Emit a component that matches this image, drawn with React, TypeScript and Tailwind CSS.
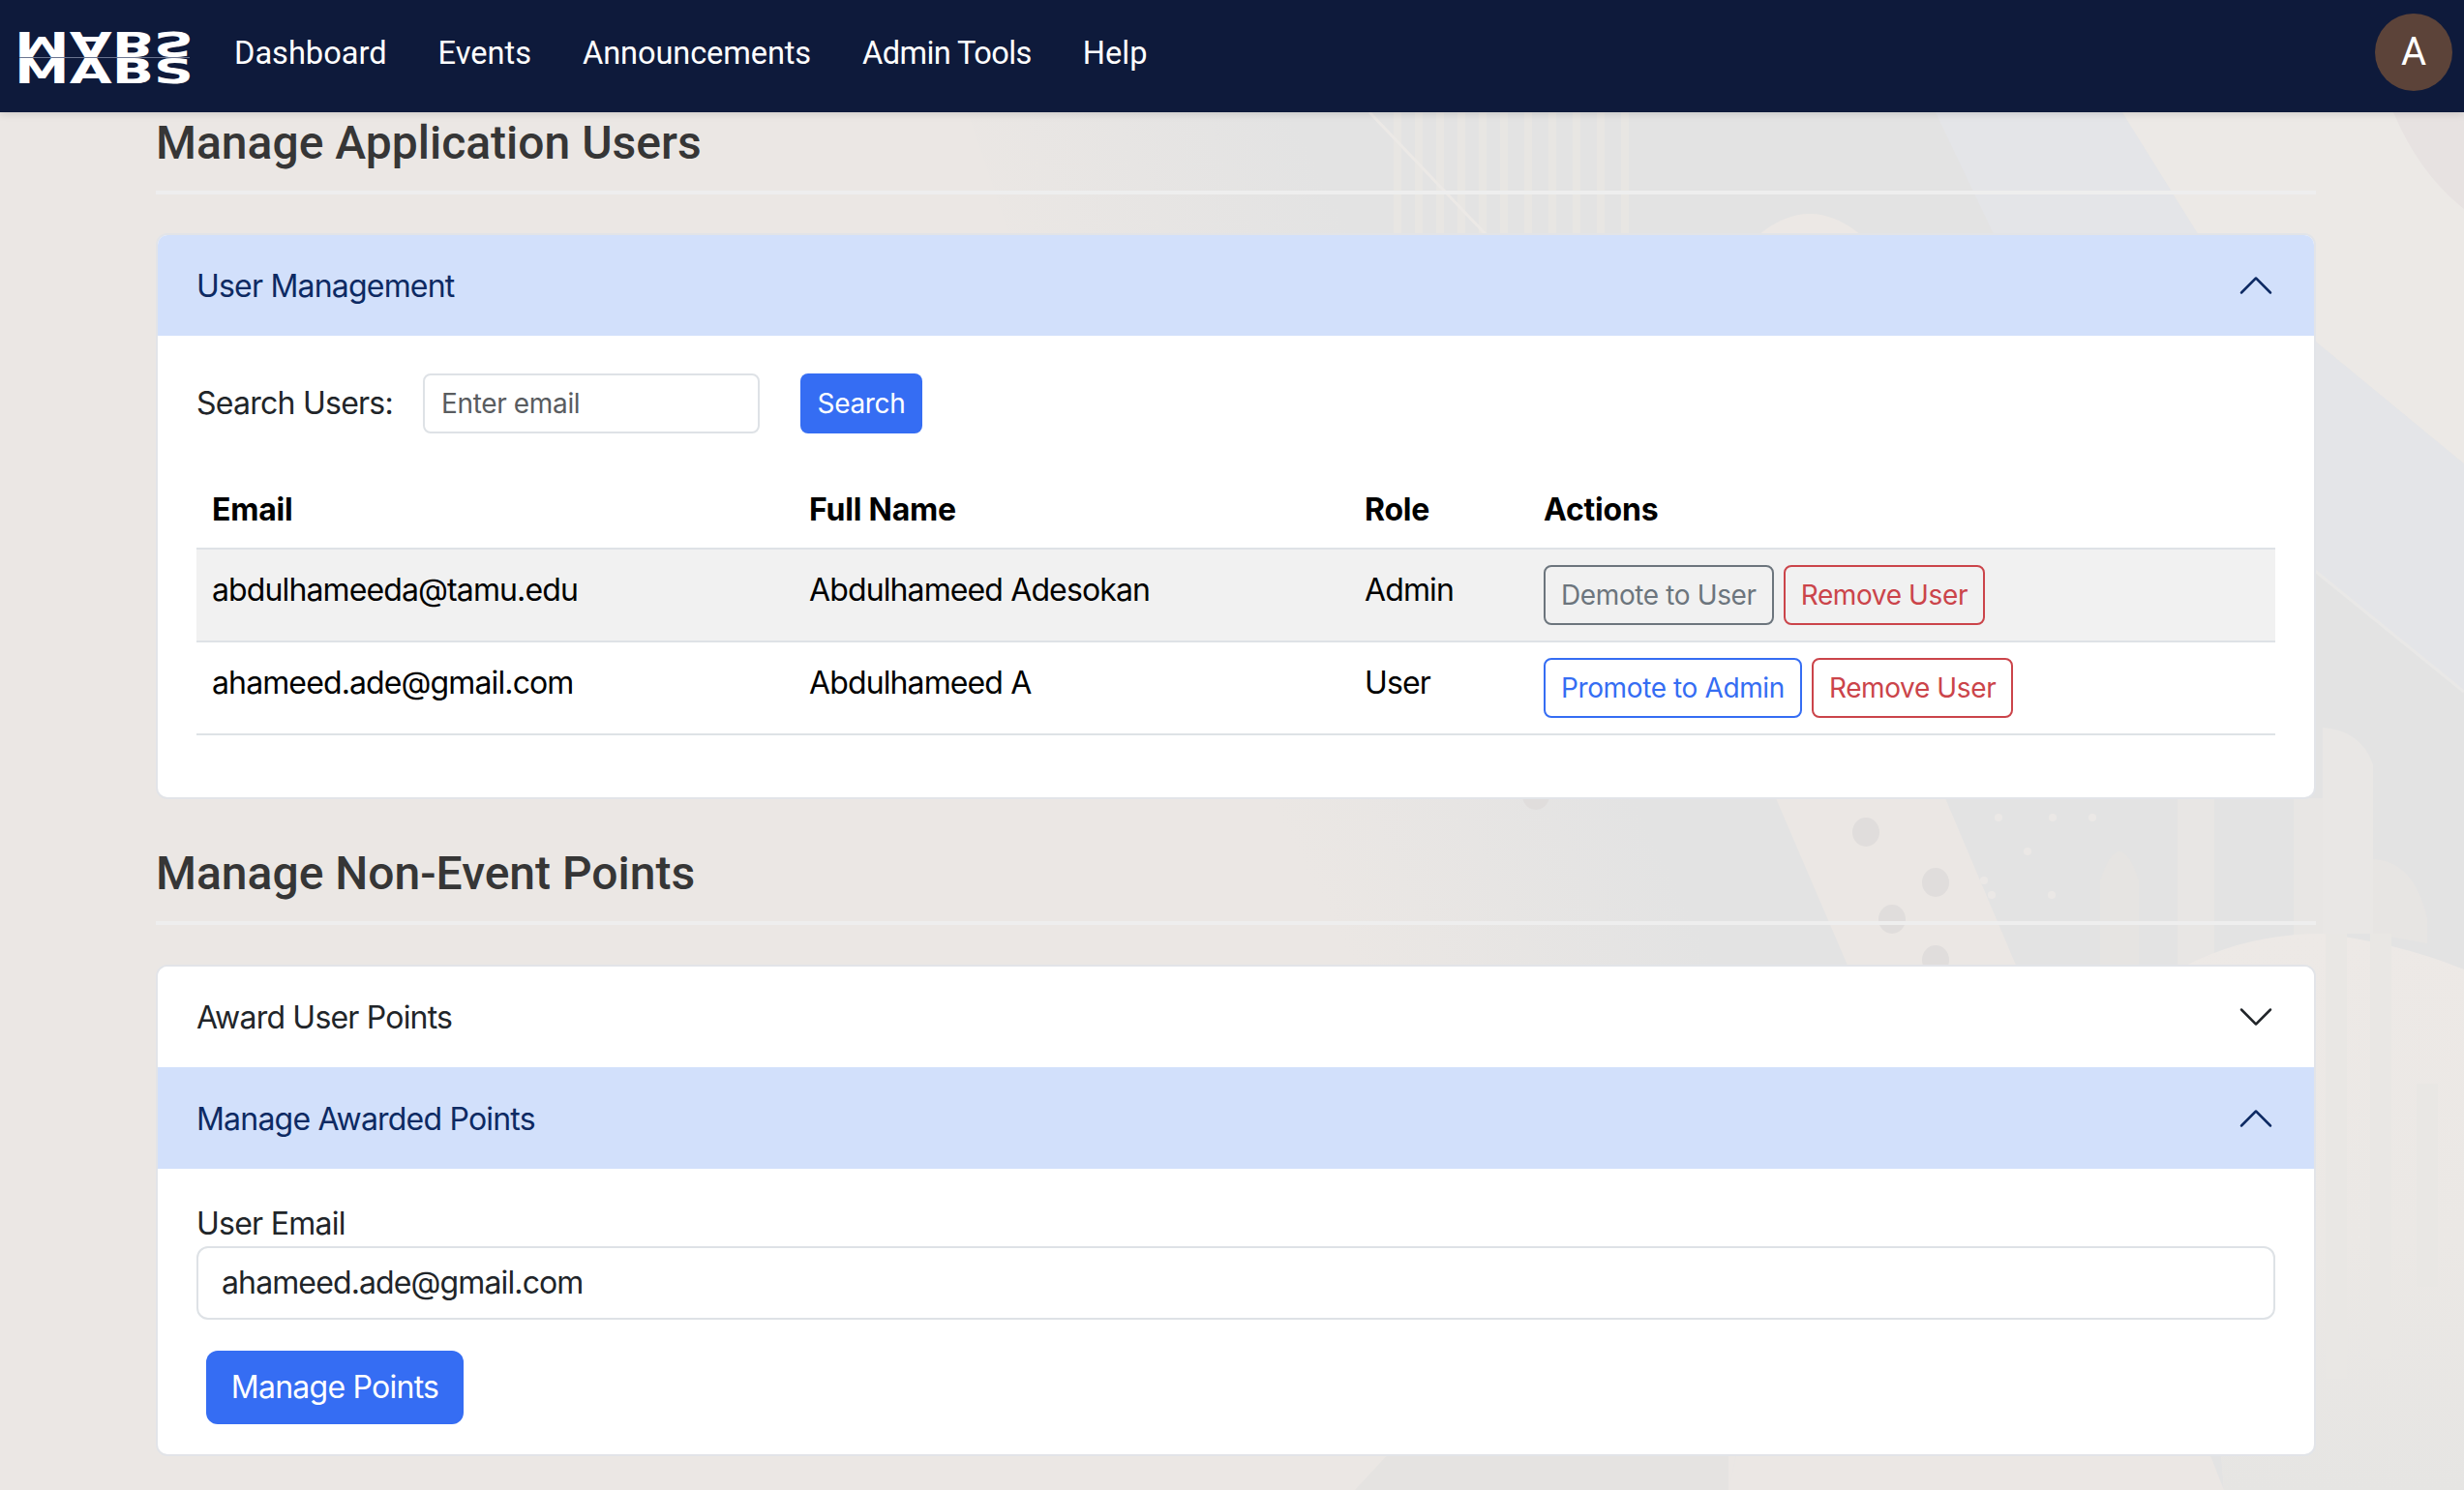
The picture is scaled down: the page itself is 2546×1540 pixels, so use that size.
const sans = "font-['Inter',sans-serif]";

function Logo() {
  return (
    <div className="mt-[10px] flex w-[176px] flex-col items-center font-['DejaVu_Sans',sans-serif] text-[36px] font-bold leading-[27px] text-white">
      <span className="block -scale-y-100 scale-x-[1.58]">MABS</span>
      <span className="h-px w-full bg-[#6b7590]" />
      <span className="block scale-x-[1.58]">MABS</span>
    </div>
  );
}

function Navbar() {
  return (
    <nav className="relative z-10 flex h-[116px] shrink-0 items-center bg-[#0e1a3b] pb-2 pl-5 pr-3 shadow-[0_2px_8px_rgba(0,0,0,0.12)]">
      <Logo />
      <div className="ml-[46px] flex gap-[53px] pt-[3px] font-['Roboto',sans-serif] text-[32.6px] text-white">
        <span>Dashboard</span>
        <span>Events</span>
        <span className="tracking-[-0.1px]">Announcements</span>
        <span className="tracking-[-0.6px]">Admin Tools</span>
        <span>Help</span>
      </div>
      <div className="ml-auto flex h-20 w-20 items-center justify-center rounded-full bg-[#5c4339] font-['Roboto',sans-serif] text-[40px] text-white">
        A
      </div>
    </nav>
  );
}

// faint artwork behind the page
function Backdrop() {
  const stripes = [1440, 1462, 1484, 1506, 1528, 1550, 1575, 1600, 1625, 1650, 1675];
  const darkDots = [
    [1928, 860],
    [2000, 912],
    [1955, 950],
    [2000, 992],
    [1587, 822],
  ];
  const lightDots = [
    [2065, 845],
    [2121, 845],
    [2162, 845],
    [2095, 880],
    [2050, 910],
    [2058, 925],
    [2120, 925],
  ];
  return (
    <svg className="absolute inset-0 h-full w-full" viewBox="0 0 2546 1540" preserveAspectRatio="none">
      <defs>
        <linearGradient gradientUnits="userSpaceOnUse" id="wash" x1="1050" x2="1350" y1="300" y2="150">
          <stop offset="0" stopColor="#ebe7e4" />
          <stop offset="1" stopColor="#e3e3e3" />
        </linearGradient>
        <linearGradient id="lower" x1="0" x2="0" y1="0" y2="1">
          <stop offset="0" stopColor="#ede9e6" />
          <stop offset="0.55" stopColor="#ebe8e5" />
          <stop offset="1" stopColor="#e6e5e3" />
        </linearGradient>
      </defs>
      <rect width="2546" height="1540" fill="#ebe7e4" />
      {/* grey field upper right */}
      <path d="M1000 116L2193 116L2285 264L2546 479L2546 1002L2400 965L2255 1000L2298 1540L1786 1540L1900 1000L1300 1000Z" fill="url(#wash)" />
      <path d="M2000 116L2193 116L2285 264L2546 479L2546 715L2392 590L2200 500L2060 242Z" fill="#e4e5e8" />
      <path d="M2193 116L2473 116L2546 216L2546 479L2285 264Z" fill="#ece9e6" />
      <path d="M2473 116L2546 116L2546 216Q2500 180 2473 116Z" fill="#e7e2e1" />
      <path d="M2392 590L2546 715" stroke="#e9e8e7" strokeWidth="3" fill="none" />
      {stripes.map((x) => (
        <rect fill="#e8e6e3" height="126" key={x} width="8" x={x} y="116" />
      ))}
      <path d="M1415 116L1535 242" stroke="#ece9e6" strokeWidth="3" fill="none" />
      <path d="M1818 242Q1870 200 1922 242Z" fill="#ece8e5" />
      {/* grey wedge and slanted band running down to the page bottom */}
      <path d="M1437 1500L1786 1500L1786 1540L1400 1540Z" fill="#e5e3e1" />
      <path d="M1835 825L2010 825L2084 1000L2298 1540L1786 1540L1910 1000Z" fill="#ebe7e4" />
      {darkDots.map(([x, y]) => (
        <ellipse cx={x} cy={y} fill="#e0dddc" key={`${x}-${y}`} rx="14" ry="15" />
      ))}
      {lightDots.map(([x, y]) => (
        <circle cx={x} cy={y} fill="#ebe8e6" key={`${x}-${y}`} r="4" />
      ))}
      <rect fill="#e8e6e4" height="175" width="38" x="2250" y="825" />
      <rect fill="#e8e6e4" height="175" width="30" x="2370" y="825" />
      <path d="M2170 1000L2170 910Q2190 850 2210 910L2210 1000Z" fill="#e6e4e2" />
      {/* arches on the right edge */}
      <path d="M2400 965L2400 752Q2440 755 2452 790L2452 965Z" fill="#e9e7e5" />
      <path d="M2452 965L2452 888Q2495 890 2508 950L2508 975Z" fill="#e7e5e3" />
      {/* lower right curve */}
      <path d="M2255 1000Q2320 965 2400 965Q2480 975 2546 1002L2546 1540L2298 1540Z" fill="url(#lower)" />
      <rect fill="#e9e7e4" height="460" width="22" x="2403" y="965" />
      <rect fill="#e9e7e4" height="440" width="22" x="2449" y="965" />
      <rect fill="#e9e7e4" height="210" width="22" x="2497" y="1120" />
    </svg>
  );
}

function SectionTitle({ children }: { children: string }) {
  return (
    <div className="border-b-4 border-[#eeeeee] pb-5">
      <h2 className="font-['Roboto',sans-serif] text-[48px] font-medium leading-[58px] text-[#363636]">{children}</h2>
    </div>
  );
}

function BootstrapChevron({ up }: { up?: boolean }) {
  return (
    <svg className={up ? "h-10 w-10 rotate-180" : "h-10 w-10"} fill="currentColor" viewBox="0 0 16 16">
      <path d="M1.646 4.646a.5.5 0 0 1 .708 0L8 10.293l5.646-5.647a.5.5 0 0 1 .708.708l-6 6a.5.5 0 0 1-.708 0l-6-6a.5.5 0 0 1 0-.708z" />
    </svg>
  );
}

function AccordionHead({ title, open }: { title: string; open?: boolean }) {
  return (
    <div
      className={
        open
          ? "flex h-[105px] items-center justify-between bg-[#d2e0fb] px-10 text-[#0d2a63] first:h-[104px]"
          : "flex h-[105px] items-center justify-between bg-white px-10 text-[#212529] first:h-[104px]"
      }
    >
      <span className="pt-0.5 text-[32px] tracking-[-0.8px]">{title}</span>
      <BootstrapChevron up={open} />
    </div>
  );
}

function ActionButton({ label, tone }: { label: string; tone: "gray" | "red" | "blue" }) {
  const toneClass =
    tone === "gray"
      ? "border-[#6c757d] text-[#6c757d]"
      : tone === "red"
        ? "border-[#cb444a] text-[#cb444a]"
        : "border-[#356df3] text-[#356df3]";
  return (
    <button className={`h-[62px] rounded-lg border-2 px-4 text-[28px] leading-[42px] tracking-[-0.38px] ${toneClass}`} type="button">
      {label}
    </button>
  );
}

const users = [
  {
    email: "abdulhameeda@tamu.edu",
    name: "Abdulhameed Adesokan",
    role: "Admin",
    action: "Demote to User",
    tone: "gray" as const,
    rowClass: "bg-[#f1f1f1]",
  },
  {
    email: "ahameed.ade@gmail.com",
    name: "Abdulhameed A",
    role: "User",
    action: "Promote to Admin",
    tone: "blue" as const,
    rowClass: "bg-white",
  },
];

const cols = "grid grid-cols-[617px_574px_185px_1fr]";

function UsersTable() {
  return (
    <div className="text-[32px] text-black">
      <div className={`${cols} h-[92px] items-center border-b-2 border-[#dee2e6] pt-3 font-bold tracking-[-0.2px]`}>
        <div className="pl-4">Email</div>
        <div className="pl-4">Full Name</div>
        <div className="pl-4">Role</div>
        <div className="pl-4">Actions</div>
      </div>
      {users.map((u) => (
        <div className={`${cols} h-[96px] border-b-2 border-[#dee2e6] tracking-[-0.88px] ${u.rowClass}`} key={u.email}>
          <div className="pl-4 pt-[18px] leading-[48px]">{u.email}</div>
          <div className="pl-4 pt-[18px] leading-[48px]">{u.name}</div>
          <div className="pl-4 pt-[18px] leading-[48px]">{u.role}</div>
          <div className="flex items-start gap-[10px] pl-4 pt-4">
            <ActionButton label={u.action} tone={u.tone} />
            <ActionButton label="Remove User" tone="red" />
          </div>
        </div>
      ))}
    </div>
  );
}

export default function App() {
  return (
    <div className={`relative flex h-[1540px] flex-col overflow-hidden ${sans}`}>
      <Backdrop />
      <Navbar />
      <main className="relative flex flex-col pl-[161px] pr-[153px] pt-[3px]">
        <SectionTitle>Manage Application Users</SectionTitle>
        <section className="mt-10 h-[585px] overflow-hidden rounded-xl border-2 border-[#e2e4e8] bg-white">
          <AccordionHead title="User Management" open />
          <div className="px-10 pt-[39px]">
            <div className="flex items-center text-[32px] tracking-[-0.75px] text-[#212529]">
              <label>Search Users:</label>
              <div className="ml-[31px] flex h-[62px] w-[348px] items-center rounded-lg border-2 border-[#dee2e6] px-[17px] text-[28px] tracking-[-0.35px] text-[#595c5f]">
                Enter email
              </div>
              <button className="ml-[42px] h-[62px] w-[126px] rounded-lg bg-[#356df3] text-[28px] tracking-[-0.35px] text-white" type="button">
                Search
              </button>
            </div>
            <div className="mt-[28px]">
              <UsersTable />
            </div>
          </div>
        </section>
        <div className="mt-[48px]">
          <SectionTitle>Manage Non-Event Points</SectionTitle>
        </div>
        <section className="mt-[41px] h-[508px] overflow-hidden rounded-xl border-2 border-[#e2e4e8] bg-white">
          <AccordionHead title="Award User Points" />
          <AccordionHead title="Manage Awarded Points" open />
          <div className="px-10 pt-[34px]">
            <label className="block text-[32px] leading-[46px] tracking-[-0.75px] text-[#212529]">User Email</label>
            <div className="flex h-[76px] items-center rounded-xl border-2 border-[#dee2e6] px-6 text-[32px] tracking-[-0.88px] text-[#212529]">
              ahameed.ade@gmail.com
            </div>
            <button className="ml-[10px] mt-8 h-[76px] w-[266px] rounded-xl bg-[#356df3] text-[32px] tracking-[-0.75px] text-white" type="button">
              Manage Points
            </button>
          </div>
        </section>
      </main>
    </div>
  );
}
